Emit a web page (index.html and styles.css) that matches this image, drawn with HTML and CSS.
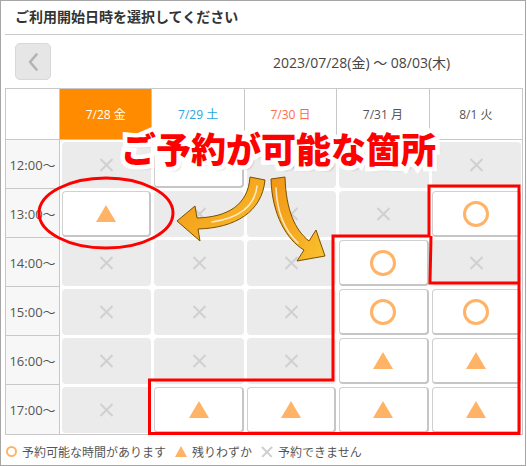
FILE: index.html
```html
<!DOCTYPE html>
<html lang="ja">
<head>
<meta charset="utf-8">
<title>予約</title>
<link rel="stylesheet" href="styles.css">
</head>
<body>
<div class="frame">
  <h1 class="title">ご利用開始日時を選択してください</h1>
  <div class="nav">
    <button class="prev" type="button" aria-label="前へ"><svg width="12" height="20" viewBox="0 0 12 20"><polyline points="9.5,2.5 3,10 9.5,17.5" fill="none" stroke="#b3b3b3" stroke-width="2.6" stroke-linecap="round" stroke-linejoin="round"/></svg></button>
    <span class="range">2023/07/28(金) ～ 08/03(木)</span>
  </div>
  <div class="table">
    <div class="h"></div>
    <div class="h today">7/28 金</div>
    <div class="h sat">7/29 土</div>
    <div class="h sun">7/30 日</div>
    <div class="h">7/31 月</div>
    <div class="h end">8/1 火</div>

    <div class="time">12:00～</div>
    <div class="cell"><div class="slot no"></div></div>
    <div class="cell"><div class="slot open"></div></div>
    <div class="cell"><div class="slot no"></div></div>
    <div class="cell"><div class="slot no"></div></div>
    <div class="cell"><div class="slot no"></div></div>

    <div class="time">13:00～</div>
    <div class="cell"><div class="slot open few"></div></div>
    <div class="cell"><div class="slot no"></div></div>
    <div class="cell"><div class="slot no"></div></div>
    <div class="cell"><div class="slot no"></div></div>
    <div class="cell"><div class="slot open ok"></div></div>

    <div class="time">14:00～</div>
    <div class="cell"><div class="slot no"></div></div>
    <div class="cell"><div class="slot no"></div></div>
    <div class="cell"><div class="slot no"></div></div>
    <div class="cell"><div class="slot open ok"></div></div>
    <div class="cell"><div class="slot no"></div></div>

    <div class="time">15:00～</div>
    <div class="cell"><div class="slot no"></div></div>
    <div class="cell"><div class="slot no"></div></div>
    <div class="cell"><div class="slot no"></div></div>
    <div class="cell"><div class="slot open ok"></div></div>
    <div class="cell"><div class="slot open ok"></div></div>

    <div class="time">16:00～</div>
    <div class="cell"><div class="slot no"></div></div>
    <div class="cell"><div class="slot no"></div></div>
    <div class="cell"><div class="slot no"></div></div>
    <div class="cell"><div class="slot open few"></div></div>
    <div class="cell"><div class="slot open few"></div></div>

    <div class="time last">17:00～</div>
    <div class="cell"><div class="slot no"></div></div>
    <div class="cell"><div class="slot open few"></div></div>
    <div class="cell"><div class="slot open few"></div></div>
    <div class="cell"><div class="slot open few"></div></div>
    <div class="cell"><div class="slot open few"></div></div>
  </div>
  <div class="legend">
    <span class="key"><i class="k k-ok"></i>予約可能な時間があります</span>
    <span class="key"><i class="k k-few"></i>残りわずか</span>
    <span class="key"><i class="k k-no"></i>予約できません</span>
  </div>

  <svg class="marks" width="527" height="466" viewBox="0 0 527 466">
    <defs>
      <linearGradient id="ag" x1="0" y1="0" x2="1" y2="1">
        <stop offset="0" stop-color="#f29516"/>
        <stop offset="0.6" stop-color="#f6ae22"/>
        <stop offset="1" stop-color="#f9c230"/>
      </linearGradient>
    </defs>
    <ellipse cx="106" cy="213" rx="67" ry="35" fill="none" stroke="#ff0000" stroke-width="3"/>
    <path d="M429 186 H519 V433.5 H149.5 V380 H333 V236 H429 Z" fill="none" stroke="#ff0000" stroke-width="3"/>
    <path d="M431 236 L430 283 H519" fill="none" stroke="#ff0000" stroke-width="3"/>
    <path class="arrow" d="M250 177 L265 180 C262 212 235 228 198 229 L200 241 L177 221 L195 206 L197 218 C228 217 248 205 250 177 Z"/>
    <path class="shine" d="M257 186 C255 205 240 218 212 222"/>
    <path class="arrow" d="M271 179 L285 177 C286 210 295 230 309 241 L316 230 L325 256 L297 261 L304 250 C287 240 272 215 271 179 Z"/>
    <path class="shine" d="M276 188 C277 212 284 230 298 243"/>
  </svg>
  <div class="callout" data-text="ご予約が可能な箇所">ご予約が可能な箇所</div>
</div>
</body>
</html>
```
FILE: styles.css
```css
* { box-sizing: border-box; }

body {
  margin: 0;
  background: #fff;
  color: #555;
  font-family: "Open Sans", "Noto Sans CJK JP", sans-serif;
}

.frame {
  position: relative;
  width: 526px;
  height: 466px;
  border: 1px solid #a6a6a6;
  padding: 0 2px 0 4px;
}

.title {
  margin: 0;
  height: 34px;
  padding-left: 10px;
  border-bottom: 1px solid #c8c8c8;
  font: bold 14px/31px "Noto Sans CJK JP", sans-serif;
  color: #333;
}

.nav {
  display: flex;
  align-items: center;
  height: 53px;
  padding-left: 10px;
}

.prev {
  display: flex;
  align-items: center;
  justify-content: center;
  width: 36px;
  height: 37px;
  padding: 0;
  border: 1px solid #d8d8d8;
  border-radius: 5px;
  background: #e6e6e6;
}

.range {
  margin-left: 222px;
  font-size: 14px;
  color: #444;
}

.table {
  display: grid;
  grid-template-columns: 54px repeat(5, 1fr);
  grid-template-rows: 51px repeat(6, 49px);
  border: 1px solid #c8c8c8;
}

.h {
  display: flex;
  align-items: center;
  justify-content: center;
  border-right: 1px solid #c8c8c8;
  border-bottom: 1px solid #c8c8c8;
  font-size: 12px;
  color: #555;
}
.h.end { border-right: 0; }
.h.today { background: #ff8c00; color: #fff; }
.h.sat { color: #2aa5e0; }
.h.sun { color: #ff6b4a; }

.time {
  display: flex;
  align-items: center;
  justify-content: center;
  background: #f7f7f7;
  border-right: 1px solid #c8c8c8;
  border-bottom: 1px solid #c8c8c8;
  font-size: 13px;
  color: #555;
}
.time.last { border-bottom: 0; }

.cell { padding: 2px 1px 1px 2px; }

.slot {
  position: relative;
  display: flex;
  align-items: center;
  justify-content: center;
  height: 100%;
  border-radius: 4px;
  background: #ebebeb;
}
.slot.open {
  background: #fff;
  border: 1px solid #d0d0d0;
  border-right: 2px solid #c6c6c6;
  border-bottom: 2px solid #c6c6c6;
}

.no::before,
.no::after {
  content: "";
  position: absolute;
  left: 50%;
  top: 50%;
  width: 17px;
  height: 2px;
  margin: -1px 0 0 -8.5px;
  background: #d0d0d0;
  transform: rotate(45deg);
}
.no::after { transform: rotate(-45deg); }

.ok::before {
  content: "";
  width: 20px;
  height: 20px;
  border: 3px solid #ffb366;
  border-radius: 50%;
}
.few::before {
  content: "";
  border-left: 10px solid transparent;
  border-right: 10px solid transparent;
  border-bottom: 17px solid #ffb366;
}

.legend {
  display: flex;
  align-items: center;
  height: 30px;
  padding: 3px 0 0 1px;
  font-size: 12px;
  color: #555;
}
.key {
  display: flex;
  align-items: center;
  gap: 5px;
  margin-right: 9px;
}
.k { position: relative; display: block; font-style: normal; }
.k-ok {
  width: 11px;
  height: 11px;
  border: 2px solid #ffb366;
  border-radius: 50%;
}
.k-few {
  width: 0;
  height: 0;
  border-left: 6px solid transparent;
  border-right: 6px solid transparent;
  border-bottom: 11px solid #ffb366;
}
.k-no { width: 12px; height: 12px; }
.k-no::before,
.k-no::after {
  content: "";
  position: absolute;
  left: -1px;
  top: 5px;
  width: 14px;
  height: 1.6px;
  background: #cfcfcf;
  transform: rotate(45deg);
}
.k-no::after { transform: rotate(-45deg); }

.marks {
  position: absolute;
  left: -1px;
  top: -1px;
  pointer-events: none;
}
.arrow {
  fill: url(#ag);
  stroke: #7a4f00;
  stroke-width: 1;
  stroke-linejoin: round;
}
.shine {
  fill: none;
  stroke: rgba(255, 255, 255, 0.75);
  stroke-width: 1.6;
  stroke-linecap: round;
}

.callout {
  position: absolute;
  left: 120px;
  top: 129px;
  z-index: 2;
  white-space: nowrap;
  font: 900 35px/35px "Noto Sans CJK JP", sans-serif;
  color: #ff0000;
}
.callout::before {
  content: attr(data-text);
  position: absolute;
  left: 0;
  top: 0;
  z-index: -1;
  color: #fff;
  -webkit-text-stroke: 9px #fff;
  text-shadow: 3px 3px 3px rgba(0, 0, 0, 0.45);
}
```
